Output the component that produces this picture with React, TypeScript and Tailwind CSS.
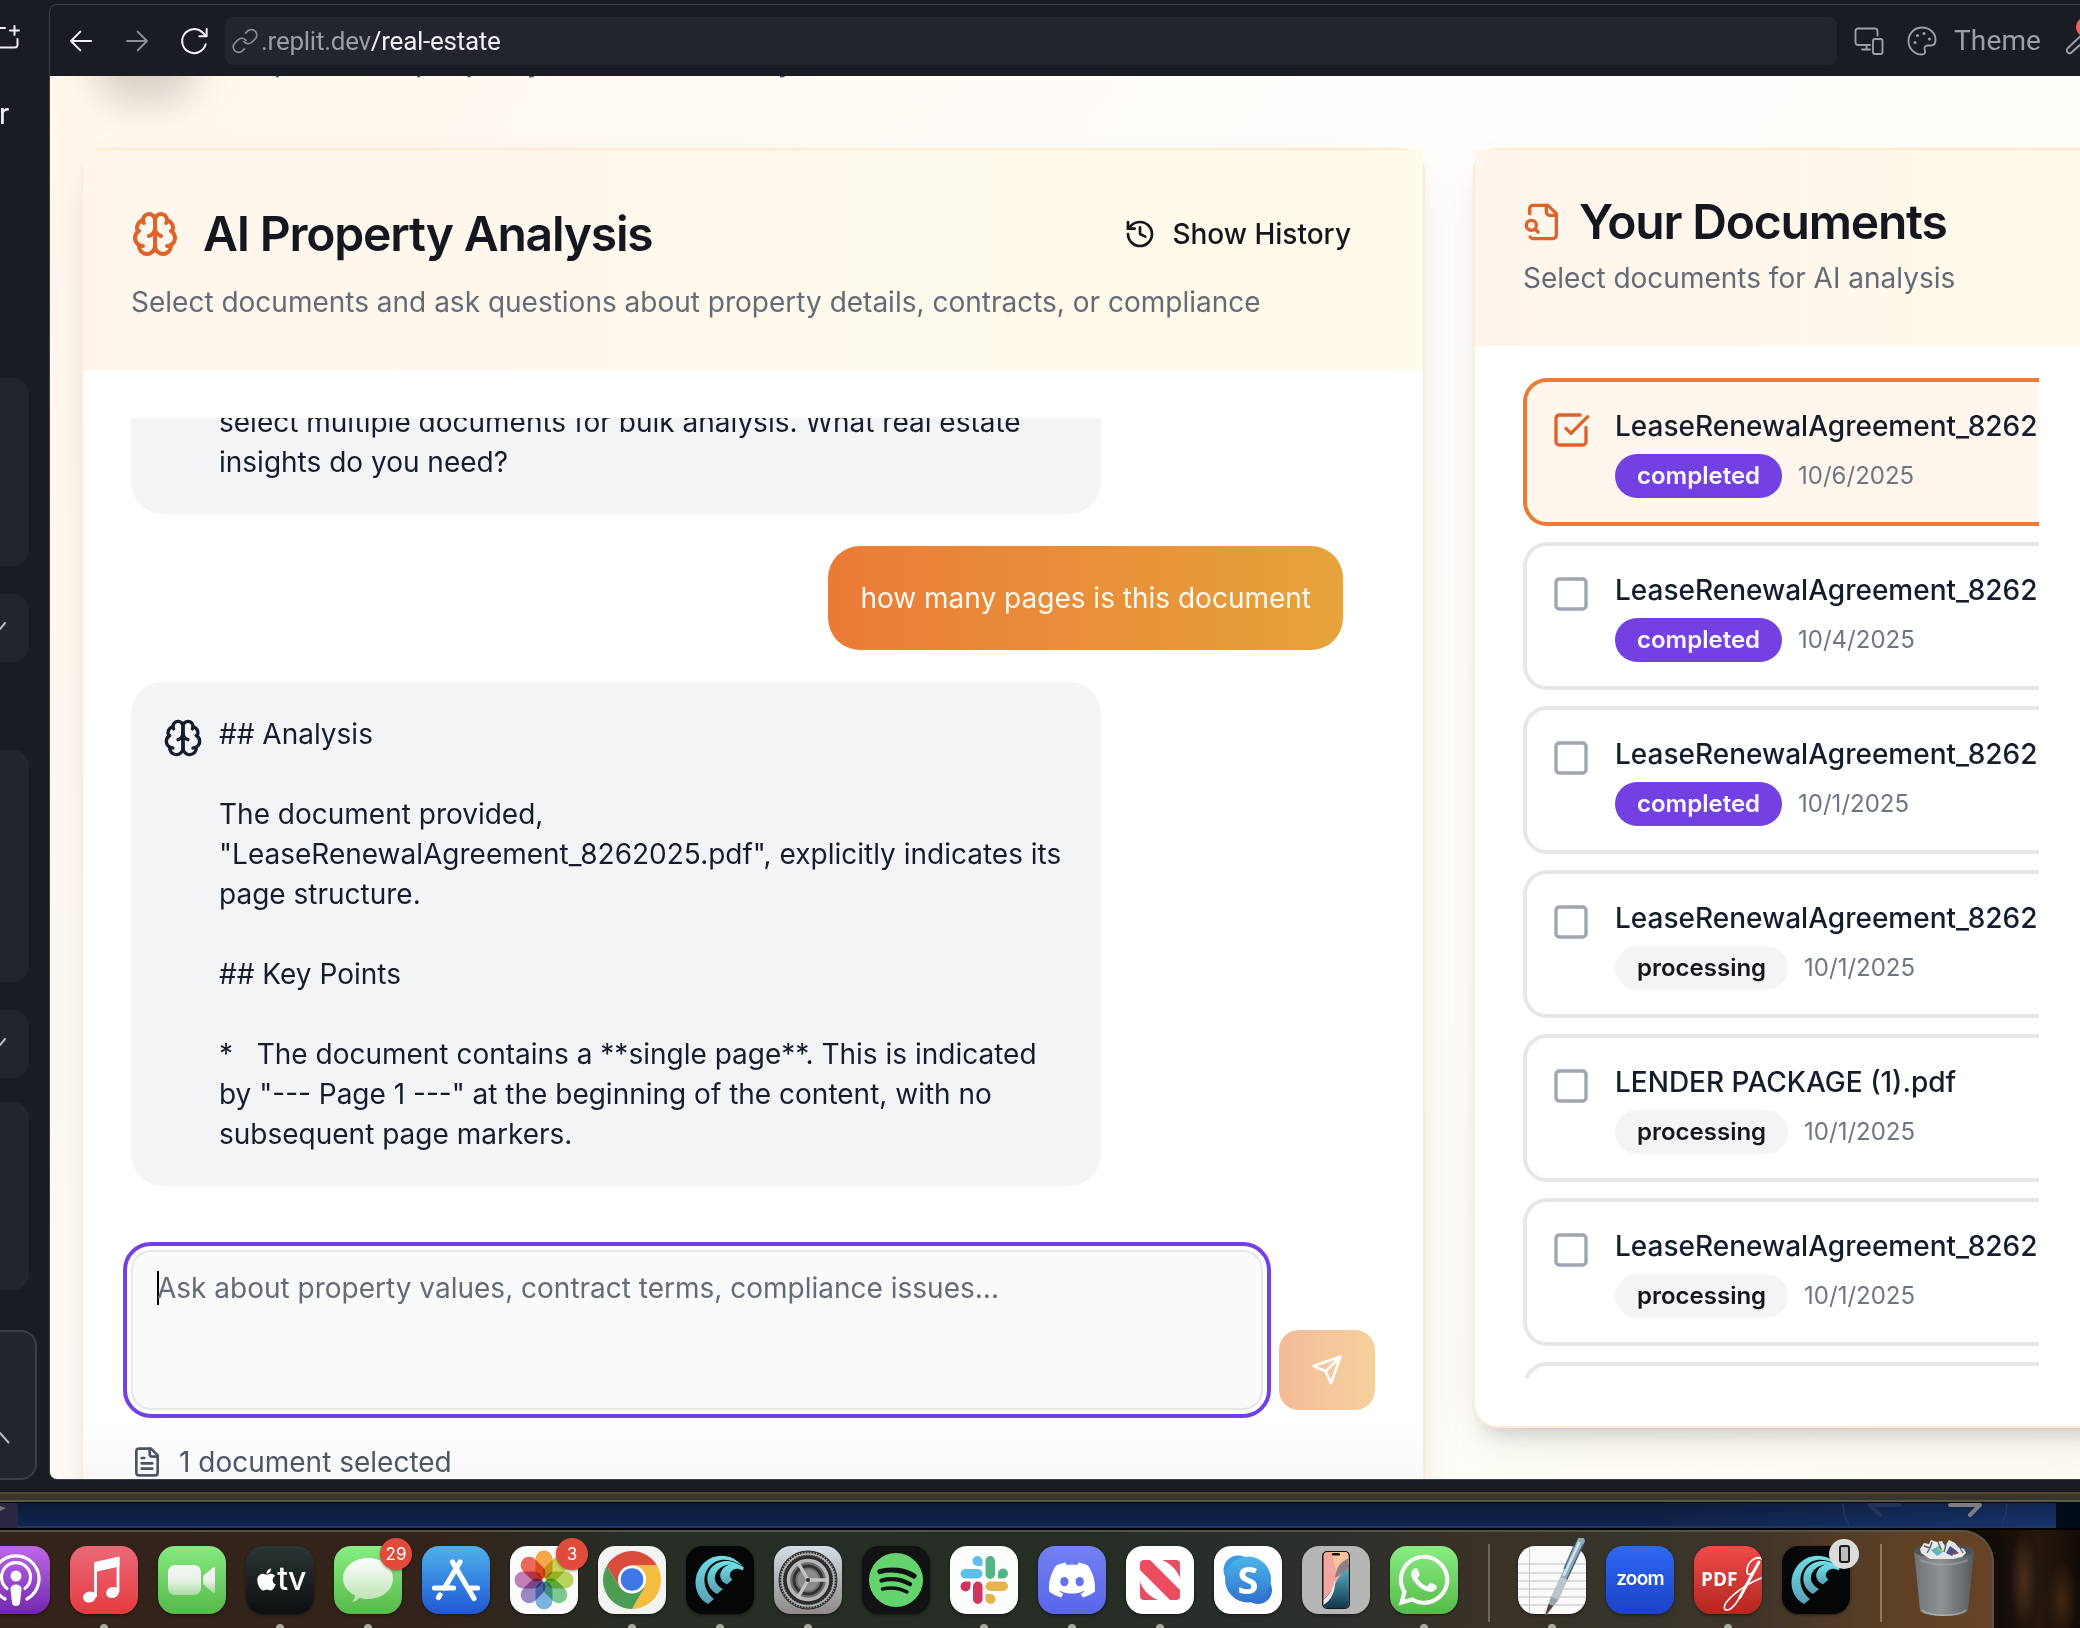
import React from "react";
import { FaApple, FaDiscord, FaWhatsapp } from "react-icons/fa";

type IconProps = { className?: string };

function Stroke({ className, width = 2, children }: { className?: string; width?: number; children: React.ReactNode }) {
  return (
    <svg viewBox="0 0 24 24" fill="none" stroke="currentColor" strokeWidth={width} strokeLinecap="round" strokeLinejoin="round" className={className}>
      {children}
    </svg>
  );
}

function Brain({ className }: IconProps) {
  return (
    <Stroke className={className}>
      <path d="M12 5a3 3 0 1 0-5.997.125 4 4 0 0 0-2.526 5.77 4 4 0 0 0 .556 6.588A4 4 0 1 0 12 18Z" />
      <path d="M12 5a3 3 0 1 1 5.997.125 4 4 0 0 1 2.526 5.77 4 4 0 0 1-.556 6.588A4 4 0 1 1 12 18Z" />
      <path d="M15 13a4.5 4.5 0 0 1-3-4 4.5 4.5 0 0 1-3 4" />
      <path d="M17.599 6.5a3 3 0 0 0 .399-1.375" />
      <path d="M6.003 5.125A3 3 0 0 0 6.401 6.5" />
      <path d="M3.477 10.896a4 4 0 0 1 .585-.396" />
      <path d="M19.938 10.5a4 4 0 0 1 .585.396" />
      <path d="M6 18a4 4 0 0 1-1.967-.516" />
      <path d="M19.967 17.484A4 4 0 0 1 18 18" />
    </Stroke>
  );
}

function History({ className }: IconProps) {
  return (
    <Stroke className={className}>
      <path d="M3 12a9 9 0 1 0 9-9 9.75 9.75 0 0 0-6.74 2.74L3 8" />
      <path d="M3 3v5h5" />
      <path d="M12 7v5l4 2" />
    </Stroke>
  );
}

function FileSearch({ className }: IconProps) {
  return (
    <Stroke className={className}>
      <path d="M14 2v4a2 2 0 0 0 2 2h4" />
      <path d="M4.268 21a2 2 0 0 0 1.727 1H18a2 2 0 0 0 2-2V7l-5-5H6a2 2 0 0 0-2 2v3" />
      <path d="m9 18-1.5-1.5" />
      <circle cx="5" cy="14" r="3" />
    </Stroke>
  );
}

function FileText({ className }: IconProps) {
  return (
    <Stroke className={className}>
      <path d="M15 2H6a2 2 0 0 0-2 2v16a2 2 0 0 0 2 2h12a2 2 0 0 0 2-2V7Z" />
      <path d="M14 2v4a2 2 0 0 0 2 2h4" />
      <path d="M10 9H8M16 13H8M16 17H8" />
    </Stroke>
  );
}

function Checkbox({ checked }: { checked: boolean }) {
  return checked ? (
    <Stroke className="mt-1 size-10 shrink-0 text-[#df6229]">
      <path d="M21 10.5V19a2 2 0 0 1-2 2H5a2 2 0 0 1-2-2V5a2 2 0 0 1 2-2h12.5" />
      <path d="m9 11 3 3L22 4" />
    </Stroke>
  ) : (
    <Stroke className="mt-1 size-10 shrink-0 text-[#9fa5b1]">
      <rect width="18" height="18" x="3" y="3" rx="2" />
    </Stroke>
  );
}

/* ---------- Workspace sidebar ---------- */

function Sidebar() {
  return (
    <aside className="flex h-[1492px] w-[49px] shrink-0 flex-col overflow-hidden bg-[#1a1c24] text-[#f0f1f4]">
      <div className="h-[76px] pt-[24px]">
        <svg viewBox="0 0 21 28" className="h-7 w-[21px]" fill="none" stroke="currentColor" strokeWidth="2" strokeLinecap="round">
          <path d="M0 4h5M14.500 2v9M10 6.500h9M17.500 15v6a2.500 2.500 0 0 1-2.500 2.500H0" />
        </svg>
      </div>
      <div className="-ml-px h-[302px] pt-[20px] font-['Roboto',sans-serif] text-[30px] leading-[36px]">r</div>
      <div className="h-[188px] w-[29px] rounded-r-2xl bg-[#22252e]" />
      <div className="mt-7 flex h-[68px] w-[29px] items-center rounded-r-2xl bg-[#22252e]">
        <svg viewBox="0 0 7 10" className="-mt-1 h-2.5 w-[7px]" fill="none" stroke="#b9bcc4" strokeWidth="2" strokeLinecap="round"><path d="M0 8 5 2" /></svg>
      </div>
      <div className="mt-[88px] h-[232px] w-[29px] rounded-r-2xl bg-[#22252e]" />
      <div className="mt-7 flex h-[68px] w-[29px] items-center rounded-r-2xl bg-[#22252e]">
        <svg viewBox="0 0 7 10" className="-mt-1 h-2.5 w-[7px]" fill="none" stroke="#b9bcc4" strokeWidth="2" strokeLinecap="round"><path d="M0 8 5 2" /></svg>
      </div>
      <div className="mt-6 h-[188px] w-[29px] rounded-r-2xl bg-[#22252e]" />
      <div className="mt-10 h-[150px] w-[37px] rounded-r-2xl border-2 border-l-0 border-[#3b3e47] bg-[#22252e] pt-[98px]">
        <svg viewBox="0 0 10 16" className="h-4 w-2.5" fill="none" stroke="#b9bcc4" strokeWidth="2" strokeLinecap="round"><path d="M0 3l8.500 9.500" /></svg>
      </div>
    </aside>
  );
}

/* ---------- Preview toolbar ---------- */

function Toolbar() {
  return (
    <div className="relative flex h-[71px] shrink-0 items-center pl-[15px] text-[#f2f3f5]">
      <Stroke className="size-8 shrink-0" width={1.5}><path d="M19.500 12H4.800M11.500 5 4.500 12l7 7" /></Stroke>
      <Stroke className="ml-6 size-8 shrink-0 text-[#8d9099]" width={1.5}><path d="M4.500 12h14.700M12.500 5l7 7-7 7" /></Stroke>
      <Stroke className="ml-[25px] size-8 shrink-0" width={1.5}><path d="M20.800 14.500a9 9 0 1 1-2.400-8.900L21.500 8.500M21.500 3v5.500H16" /></Stroke>
      <div className="ml-[15px] flex h-12 w-[1612px] shrink-0 items-center rounded-lg bg-[#22252e] pl-1.5 font-['Roboto',sans-serif] text-[26px] leading-8">
        <Stroke className="size-[28px] text-[#8d9099]" width={1.4}>
          <path d="M10 13.500a4.700 4.700 0 0 0 7 .5l2.700-2.700a4.700 4.700 0 0 0-6.600-6.700l-1.600 1.600" transform="translate(1 -1)" />
          <path d="M14 10.500a4.700 4.700 0 0 0-7-.5l-2.700 2.700a4.700 4.700 0 0 0 6.600 6.700l1.600-1.600" transform="translate(-1 1)" />
        </Stroke>
        <span className="ml-[2px] tracking-[-0.01em] text-[#9a9da6]">.replit.dev</span>
        <span className="tracking-[-0.01em] text-[#eff0f3]">/real-estate</span>
      </div>
      <div className="ml-[17px] flex shrink-0 items-center text-[#9c9fa8]">
        <svg viewBox="0 0 30 28" className="h-7 w-[30px]" fill="none" stroke="currentColor" strokeWidth="1.900" strokeLinecap="round" strokeLinejoin="round">
          <path d="M16 18H4a2.500 2.500 0 0 1-2.500-2.500V4A2.500 2.500 0 0 1 4 1.500h17A2.500 2.500 0 0 1 23.500 4v4.500M8 22.500h8M12.500 18v4.500" />
          <rect x="19" y="12" width="9.500" height="15" rx="2" />
        </svg>
        <svg viewBox="0 0 30 30" className="ml-[23px] size-[30px]" fill="none" stroke="currentColor" strokeWidth="1.900" strokeLinejoin="round">
          <path d="M15 1.500C7.500 1.500 1.500 7.500 1.500 15S7.500 28.500 15 28.500c2.500 0 3.800-2 2.900-4.200-1.200-2.900.3-4.800 3-4.800h2.600c3 0 5-2.200 5-5.500C28.500 6.800 22.500 1.500 15 1.500Z" />
          <g fill="currentColor" stroke="none"><circle cx="8" cy="16.500" r="1.500" /><circle cx="10.500" cy="9.500" r="1.500" /><circle cx="17" cy="7.500" r="1.500" /><circle cx="22.500" cy="13" r="1.500" /></g>
        </svg>
        <span className="ml-[17px] font-['Roboto',sans-serif] text-[28px] leading-9 tracking-[0.005em]">Theme</span>
        <Stroke className="ml-[22px] size-8 shrink-0" width={1.500}><path d="M14 7.500l-10.500 10a2.100 2.100 0 0 0 3 3L17 11a5 5 0 0 0 5-7l-3 3-2.500-2.500 3-3a5 5 0 0 0-5.500 6Z" /></Stroke>
      </div>
      <span className="absolute top-[12px] left-[2026px] size-5 rounded-full bg-[#f1625f]" />
    </div>
  );
}

/* ---------- Analysis card ---------- */

function AnalysisCard() {
  return (
    <section className="h-[1500px] w-[1344px] shrink-0 rounded-3xl border-2 border-[#fdebd3] bg-white shadow-[0_20px_50px_-10px_rgba(0,0,0,0.10),0_16px_20px_-12px_rgba(0,0,0,0.10)]">
      <header className="h-[220px] bg-linear-to-r from-[#fff6ed] to-[#fffbea] p-12">
        <div className="flex h-[72px] items-center justify-between">
          <h2 className="flex items-center text-5xl leading-[48px] font-semibold tracking-[-0.025em] text-[#14171f]">
            <Brain className="mr-6 size-12 text-[#df6229]" />
            AI Property Analysis
          </h2>
          <button className="flex items-center pr-6 text-[28px] leading-10 font-medium text-[#14171f]">
            <History className="mr-4 size-8" />
            Show History
          </button>
        </div>
        <p className="mt-3 text-[28px] leading-10 text-[#646b78]">Select documents and ask questions about property details, contracts, or compliance</p>
      </header>
      <div className="h-[1108px] bg-linear-to-b from-white from-95% to-[#f8f8f9] px-12 pt-12 text-[28px] leading-10 text-[#151c2c]">
        <div className="flex h-[768px] w-[1212px] flex-col justify-end gap-8 overflow-hidden">
          <div className="w-[970px] rounded-[32px] bg-[#f3f4f6] p-8 pl-[88px]">
            select multiple documents for bulk analysis. What real estate insights do you need?
          </div>
          <div className="ml-auto rounded-[32px] bg-linear-to-r from-[#ea7b36] to-[#e6a33b] p-8 text-[#fffaf3]">how many pages is this document</div>
          <div className="flex w-[970px] gap-4 rounded-[32px] bg-[#f3f4f6] p-8">
            <Brain className="mt-1 size-10 shrink-0" />
            <p className="whitespace-pre-wrap">{`## Analysis

The document provided, "LeaseRenewalAgreement_8262025.pdf", explicitly indicates its page structure.

## Key Points

*   The document contains a **single page**. This is indicated by "--- Page 1 ---" at the beginning of the content, with no subsequent page markers.`}</p>
          </div>
        </div>
        <div className="mt-16 flex items-end gap-4">
          <div className="flex h-40 w-[1132px] items-start rounded-[20px] border-2 border-[#e5e7eb] bg-[#fafafa] px-6 pt-4 text-[#646b78] outline-4 outline-offset-4 outline-[#7340e4]">
            <span className="mt-[3px] -mr-0.5 h-[34px] w-0.5 bg-black" />
            <span>Ask about property values, contract terms, compliance issues...</span>
          </div>
          <button className="flex h-20 w-24 items-center justify-center rounded-[20px] bg-linear-to-r from-[#f4bb99] to-[#f4d19c] text-white">
            <Stroke className="size-8"><path d="m22 2-7 20-4-9-9-4Z" /><path d="M22 2 11 13" /></Stroke>
          </button>
        </div>
        <div className="mt-8 flex items-center gap-4 text-[#4b5563]">
          <FileText className="size-8" />
          1 document selected
        </div>
      </div>
    </section>
  );
}

/* ---------- Documents card ---------- */

const DOCS = [
  { name: "LeaseRenewalAgreement_8262025.pdf", done: true, date: "10/6/2025", checked: true },
  { name: "LeaseRenewalAgreement_8262025.pdf", done: true, date: "10/4/2025", checked: false },
  { name: "LeaseRenewalAgreement_8262025.pdf", done: true, date: "10/1/2025", checked: false },
  { name: "LeaseRenewalAgreement_8262025.pdf", done: false, date: "10/1/2025", checked: false },
  { name: "LENDER PACKAGE (1).pdf", done: false, date: "10/1/2025", checked: false },
  { name: "LeaseRenewalAgreement_8262025.pdf", done: false, date: "10/1/2025", checked: false },
  { name: "LeaseRenewalAgreement_8262025.pdf", done: false, date: "10/1/2025", checked: false },
];

function DocumentsCard() {
  return (
    <section className="h-[1280px] w-[660px] shrink-0 rounded-3xl border-2 border-[#fdebd3] bg-white shadow-[0_20px_50px_-10px_rgba(0,0,0,0.10),0_16px_20px_-12px_rgba(0,0,0,0.16)]">
      <header className="h-[196px] bg-linear-to-r from-[#fff5ec] to-[#fffbea] p-12">
        <h2 className="flex items-center text-5xl leading-[48px] font-semibold tracking-[-0.025em] text-[#14171f]">
          <FileSearch className="mr-4 size-10 text-[#df6229]" />
          Your Documents
        </h2>
        <p className="mt-3 text-[28px] leading-10 text-[#646b78]">Select documents for AI analysis</p>
      </header>
      <div className="mt-8 ml-12 flex h-[1000px] w-[516px] flex-col gap-4 overflow-hidden">
        {DOCS.map((doc, i) => (
          <div
            key={i}
            className={
              doc.checked
                ? "flex h-[148px] w-[760px] shrink-0 gap-6 rounded-3xl border-4 border-[#ea7c37] bg-[#fff7ed] p-6"
                : "flex h-[148px] w-[760px] shrink-0 gap-6 rounded-3xl border-4 border-[#e5e7eb] bg-white p-6"
            }
          >
            <Checkbox checked={doc.checked} />
            <div>
              <div className="text-[28px] leading-10 font-medium text-[#151c2c]">{doc.name}</div>
              <div className="mt-2 flex items-center gap-4 text-2xl leading-8">
                <span
                  className={
                    doc.done
                      ? "flex h-11 items-center rounded-full bg-[#7340e4] px-[22px] font-semibold text-[#faf8ff]"
                      : "flex h-11 items-center rounded-full bg-[#f3f4f6] px-[22px] font-semibold text-[#15171e]"
                  }
                >
                  {doc.done ? "completed" : "processing"}
                </span>
                <span className="text-[#6f7683]">{doc.date}</span>
              </div>
            </div>
          </div>
        ))}
      </div>
    </section>
  );
}

/* ---------- Dock ---------- */

function AppIcon({ bg, dot, badge, children }: { bg?: string; dot?: boolean; badge?: React.ReactNode; children: React.ReactNode }) {
  return (
    <div className="relative h-[96px] w-[68px] shrink-0">
      <div className={"relative size-[68px] overflow-hidden rounded-[17px] shadow-[0_1px_3px_rgba(0,0,0,0.5)] " + (bg ?? "")}>{children}</div>
      {badge}
      {dot && <span className="absolute top-[78px] left-[30px] size-2 rounded-full bg-[#a9aa9f]" />}
    </div>
  );
}

function Badge({ n }: { n: string }) {
  return (
    <span className="absolute -top-2 left-[46px] flex size-8 items-center justify-center rounded-full bg-[#e04b3c] text-[17px] leading-none text-white shadow-[0_1px_3px_rgba(0,0,0,0.4)]">
      {n}
    </span>
  );
}

const Art = ({ children }: { children: React.ReactNode }) => (
  <svg viewBox="0 0 68 68" className="size-[68px]">{children}</svg>
);

function Wave({ id }: { id: string }) {
  return (
    <Art>
      <defs>
        <linearGradient id={id} x1="0" y1="0" x2="0" y2="1"><stop offset="0" stopColor="#6fdfe6" /><stop offset="1" stopColor="#5aa0b4" /></linearGradient>
      </defs>
      <g fill={`url(#${id})`}>
        <path d="M22 58C7 50 5 28 19 16 30 6 48 8 57 21 45 12 32 11 23 21 15 31 18 45 28 53Z" />
        <path d="M31 48C20 42 18 28 27 20 35 13 48 13 57 22 46 17 38 18 32 24 26 31 29 39 37 43Z" />
        <path d="M41 38.500C33 35 32 27 38 21.500 44 16.500 53 18 58 21.500L56.500 24.500C51 21 47 23 45 26 43 29 44 31.500 46.500 33.500Z" />
      </g>
    </Art>
  );
}

const PETALS = ["#f59a23", "#c5cf2e", "#a8cf3c", "#63bf7d", "#5fa5dc", "#8272b8", "#b765a8", "#ea4b38"];
const RULES = [18, 27, 35, 43, 51, 59];
const ANGLES = Array.from({ length: 60 }, (_, i) => i * 6);

function Dock() {
  return (
    <div className="flex h-[98px] w-full bg-[radial-gradient(ellipse_14px_50px_at_2024px_50px,#4a2f1a,transparent),radial-gradient(ellipse_16px_40px_at_2062px_70px,#40250f,transparent),linear-gradient(90deg,#140c07_0%,#140c07_96%,#25170d_98%,#120b07_100%)]">
      <div className="h-[140px] w-[1994px] shrink-0 overflow-hidden rounded-tr-[32px] border-t-2 border-r-2 border-[#57534a] bg-[linear-gradient(90deg,#33231a_0%,#33241b_22%,#262e26_32%,#262d25_55%,#2b2f2e_66%,#3a3227_74%,#36342b_82%,#3f3428_88%,#5c4025_95%,#684325_100%)]">
        <div className="-ml-[18px] flex items-start gap-5 pt-3.5">
          <AppIcon bg="bg-linear-to-b from-[#bd68e6] to-[#7226b0]">
            <Art>
              <g fill="none" stroke="#fff" strokeWidth="3.200" strokeLinecap="round"><path d="M23 53a23 23 0 1 1 22 0" /><path d="M25 42.500a14.500 14.500 0 1 1 18 0" /></g>
              <circle cx="34" cy="30" r="5.500" fill="#fff" /><path d="M28.500 43c0-6 11-6 11 0l-1.500 14c-.5 4-7.500 4-8 0Z" fill="#fff" />
            </Art>
          </AppIcon>
          <AppIcon dot bg="bg-linear-to-b from-[#ea6878] to-[#e6393f]">
            <Art>
              <path d="M25.500 51V18.500L48 13.500V46" fill="none" stroke="#fff" strokeWidth="2.800" /><path d="M24.500 16 49.500 10.500V20.500L24.500 26Z" fill="#fff" />
              <ellipse cx="19.500" cy="51" rx="6.500" ry="5.500" fill="#fff" transform="rotate(-15 19.500 51)" /><ellipse cx="42.500" cy="46.500" rx="6.500" ry="5.500" fill="#fff" transform="rotate(-15 42.500 46.500)" />
            </Art>
          </AppIcon>
          <AppIcon bg="bg-linear-to-b from-[#85ea80] to-[#57b948]">
            <Art>
              <defs><linearGradient id="cam" x1="0" y1="0" x2="0" y2="1"><stop offset="0" stopColor="#f4f6f4" /><stop offset=".5" stopColor="#eaf3e8" /><stop offset="1" stopColor="#a9dda2" /></linearGradient></defs>
              <rect x="10" y="19" width="33" height="30" rx="7" fill="url(#cam)" /><path d="M45 30 55 21.500c1-.8 2-.3 2 1v23c0 1.300-1 1.800-2 1L45 38Z" fill="url(#cam)" />
            </Art>
          </AppIcon>
          <AppIcon dot bg="bg-linear-to-b from-[#2a3634] to-[#0c0f11]">
            <div className="flex size-full items-center justify-center pb-0.5 text-white">
              <FaApple className="size-[25px]" />
              <span className="-ml-[2px] font-['Inter',sans-serif] text-[32px] leading-none font-medium tracking-tight">tv</span>
            </div>
          </AppIcon>
          <AppIcon dot bg="bg-linear-to-b from-[#88ee83] to-[#57b948]" badge={<Badge n="29" />}>
            <Art>
              <defs><linearGradient id="msg" x1="0" y1="0" x2="0" y2="1"><stop offset="0" stopColor="#fff" /><stop offset="1" stopColor="#b9e2b1" /></linearGradient></defs>
              <path d="M34 12c14 0 25 9 25 20.500S48 53 34 53c-3 0-6-.4-8.500-1.200-2 2.200-4.500 3.700-7.500 4.200 2-2 3-4.500 3-6.500C13.500 46 9 39.500 9 32.500 9 21 20 12 34 12Z" fill="url(#msg)" />
            </Art>
          </AppIcon>
          <AppIcon bg="bg-linear-to-b from-[#50b0ea] to-[#2456d3]">
            <Art>
              <g stroke="#fff" strokeWidth="5.200" strokeLinecap="round"><path d="M12.500 42h19M49 42h6.500" /><path d="M38 16 22.500 42" /><path d="M30.500 16 52 52.500" /><path d="M16.500 51.500l1.500-2.500" /></g>
            </Art>
          </AppIcon>
          <AppIcon bg="bg-[#fbfbfb]" badge={<Badge n="3" />}>
            <Art>
              {PETALS.map((c, i) => (
                <rect key={c} x="25.500" y="4.500" width="17" height="28" rx="8.500" fill={c} fillOpacity="0.82" transform={`rotate(${i * 45} 34 34)`} style={{ mixBlendMode: "multiply" }} />
              ))}
            </Art>
          </AppIcon>
          <AppIcon dot bg="bg-[#f3f3f3]">
            <Art>
              <path d="M34 33.500 8.900 19.500A29 29 0 0 1 59.100 19.500H34Z" fill="#d94d3c" />
              <path d="M34 19.500H59.100A29 29 0 0 1 34 63L46.500 41Z" fill="#f3bd42" />
              <path d="M34 63A29 29 0 0 1 8.900 19.500L21.500 41.300 46.500 41.200Z" fill="#4b9d52" />
              <path d="M8.900 19.500 21.500 41.300 34 34V19.500Z" fill="#d94d3c" />
              <circle cx="34" cy="33.500" r="14" fill="#fff" /><circle cx="34" cy="33.500" r="11.300" fill="#3e78e6" />
            </Art>
          </AppIcon>
          <AppIcon dot bg="bg-[#050607]"><Wave id="wave-a" /></AppIcon>
          <AppIcon dot bg="bg-linear-to-b from-[#d5dfe7] to-[#8f8a88]">
            <Art>
              <circle cx="34" cy="34" r="29.500" fill="#2a2c2e" /><circle cx="34" cy="34" r="26" fill="none" stroke="#b4b8bb" strokeWidth="1.500" />
              <g stroke="#a7abae" strokeWidth="1.100">{ANGLES.map((a) => <path key={a} d="M34 5.500v4" transform={`rotate(${a} 34 34)`} />)}</g>
              <circle cx="34" cy="34" r="19.500" fill="#6d6f70" stroke="#b4b8bb" strokeWidth="3.500" />
              <circle cx="34" cy="34" r="14" fill="none" stroke="#303234" strokeWidth="3" /><circle cx="34" cy="34" r="10.500" fill="#8b8c8c" />
              <g stroke="#c0c3c5" strokeWidth="3.400"><path d="M34 34h20M34 34 24 16.500M34 34 24 51.500" /></g><circle cx="34" cy="34" r="2" fill="#2a2c2e" />
            </Art>
          </AppIcon>
          <AppIcon bg="bg-[#121212]">
            <Art>
              <circle cx="34" cy="34" r="27" fill="#65d46e" />
              <g fill="none" stroke="#121212" strokeLinecap="round"><path d="M18 25.500c11-3 24-1.500 34 4.500" strokeWidth="5.200" /><path d="M19.500 34.500c10-2.500 20-1.300 28.500 3.700" strokeWidth="4.300" /><path d="M20.500 43c8.500-2 17-1 24.500 3" strokeWidth="3.500" /></g>
            </Art>
          </AppIcon>
          <AppIcon dot bg="bg-[#fdfdfd]">
            <Art>
              <g fill="#5ec0ea"><rect x="10.500" y="23" width="22" height="9.500" rx="4.750" /><path d="M32.500 20V15a5 5 0 1 0-5 5Z" /></g>
              <g fill="#55b384"><rect x="35.500" y="10" width="9.500" height="23" rx="4.750" /><path d="M48 32.500V27.500a5 5 0 1 1 5 5Z" /></g>
              <g fill="#e5b44c"><rect x="35.500" y="35.500" width="22.500" height="9.500" rx="4.750" /><path d="M35.500 48h5a5 5 0 1 1-5 5Z" /></g>
              <g fill="#d0345f"><rect x="23" y="35.500" width="9.500" height="22.500" rx="4.750" /><path d="M20.500 35.500v5a5 5 0 1 1-5-5Z" /></g>
            </Art>
          </AppIcon>
          <AppIcon dot bg="bg-linear-to-b from-[#7480f0] to-[#5865ea]">
            <div className="flex size-full items-center justify-center text-white"><FaDiscord className="size-[50px]" /></div>
          </AppIcon>
          <AppIcon dot bg="bg-white">
            <Art>
              <path d="M14 18a4 4 0 0 1 4-4h6l30 30v6a4 4 0 0 1-4 4h-6L14 24Z" fill="#ea4d60" /><path d="M36 14h14a4 4 0 0 1 4 4v14C51 24 44 17 36 14Z" fill="#e54f62" /><path d="M14 36c3 8 10 15 18 18H18a4 4 0 0 1-4-4Z" fill="#e54f62" />
            </Art>
          </AppIcon>
          <AppIcon bg="bg-white">
            <div className="relative size-full">
              <Art>
                <defs><linearGradient id="sky" x1="0" y1="0" x2="0" y2="1"><stop offset="0" stopColor="#4cb4ec" /><stop offset="1" stopColor="#2f73cd" /></linearGradient></defs>
                <circle cx="24" cy="24" r="14.500" fill="#3b9be0" /><circle cx="44" cy="44" r="14" fill="#2f73cd" /><circle cx="34" cy="33.500" r="23" fill="url(#sky)" />
              </Art>
              <span className="absolute inset-0 flex items-center justify-center pb-0.5 font-['Open_Sans',sans-serif] text-[38px] leading-none font-bold text-white">S</span>
            </div>
          </AppIcon>
          <AppIcon bg="bg-[#b5b6b6]">
            <Art>
              <defs><linearGradient id="ph" x1="0" y1="0" x2="0" y2="1"><stop offset="0" stopColor="#4fb4c4" /><stop offset="1" stopColor="#11314c" /></linearGradient><clipPath id="phc"><rect x="21.500" y="6" width="25" height="56" rx="4" /></clipPath></defs>
              <rect x="20" y="5" width="28" height="58" rx="5" fill="#15171a" />
              <g clipPath="url(#phc)"><rect x="21" y="6" width="27" height="57" fill="#f3a6a0" /><path d="M30 6h18v12c-8 2-10 6-13 14Z" fill="#f7c49d" /><path d="M48 12c-9 3-14 9-15 20l15-9Z" fill="#8a7f8c" /><path d="M48 22C34 28 36 40 21 54v9h27Z" fill="url(#ph)" /><path d="M33 33C31 45 26 50 21 54v5c8-4 13-14 12-26Z" fill="#f4e6e2" /></g>
              <rect x="30" y="7" width="8" height="2.500" rx="1.200" fill="#111" />
            </Art>
          </AppIcon>
          <AppIcon dot bg="bg-linear-to-b from-[#88ee83] to-[#57b948]">
            <div className="flex size-full items-center justify-center text-[#f6f7f6]"><FaWhatsapp className="size-[58px]" /></div>
          </AppIcon>
          <div className="-mt-0.5 ml-[10px] h-[78px] w-0.5 shrink-0 bg-[#6c6b62]" />
          <div className="ml-2 flex gap-5">
            <AppIcon
              dot
              bg="bg-[#fbfbfb]"
              badge={
                <svg viewBox="0 0 68 84" className="absolute -top-2 left-0 h-[84px] w-[68px]">
                  <path d="M63 3 37 60" stroke="#8fa9bf" strokeWidth="7.500" strokeLinecap="round" />
                  <path d="M61.500 4 45.500 38" stroke="#cfe4f3" strokeWidth="2.600" />
                  <path d="M65.500 6 48 43" stroke="#4d5a66" strokeWidth="1.400" />
                  <path d="M56 8 46 31" stroke="#5d7183" strokeWidth="1.600" />
                  <path d="M46 40 36.500 60" stroke="#bcc4ca" strokeWidth="7.500" />
                  <path d="M32.500 59 40 62.500 27.500 78Z" fill="#9aa3aa" />
                  <path d="M30.500 66 35 68 26.500 79Z" fill="#4d3f3d" />
                </svg>
              }
            >
              <Art><path d="M11.500 0v68" stroke="#f2b5ae" strokeWidth="1" /><g stroke="#bcbdbe" strokeWidth="1.200">{RULES.map((y) => <path key={y} d={`M0 ${y}h68`} />)}</g></Art>
            </AppIcon>
            <AppIcon bg="bg-linear-to-b from-[#2e69f0] to-[#1b41c9]">
              <span className="flex size-full items-center justify-center pb-1 font-['Inter',sans-serif] text-[19px] leading-none font-semibold tracking-[-0.04em] text-white">zoom</span>
            </AppIcon>
            <AppIcon dot bg="bg-linear-to-b from-[#f04b49] to-[#b5261f]">
              <div className="relative size-full">
                <Art>
                  <g fill="none" stroke="#fff" strokeLinecap="round">
                    <path d="M68 13C62 9 53 16 53 25c0 7 7 3 12-9" strokeWidth="1.800" />
                    <path d="M65 16 46 51" strokeWidth="3" />
                    <path d="M46 51C41 60 35 66 31 63.500 27 58 44 42 67 32" strokeWidth="1.600" />
                  </g>
                </Art>
                <span className="absolute top-[24px] left-[7px] font-['Open_Sans',sans-serif] text-[19px] leading-none font-bold text-white">PDF</span>
              </div>
            </AppIcon>
            <AppIcon
              bg="bg-[#050607]"
              badge={
                <span className="absolute -top-[7px] left-[47px] flex size-[30px] items-center justify-center rounded-full bg-[#dcdcdb]">
                  <span className="h-[18px] w-[11px] rounded-[3px] border-2 border-[#1b1b1b] bg-[#bdbdbd]" />
                </span>
              }
            >
              <Wave id="wave-b" />
            </AppIcon>
          </div>
          <div className="-mt-0.5 ml-[10px] h-[78px] w-0.5 shrink-0 bg-[#8e7a63]" />
          <svg viewBox="0 0 68 84" className="-mt-2 ml-[8px] h-[84px] w-[68px]">
            <defs><linearGradient id="bin" x1="0" y1="0" x2="1" y2="0"><stop offset="0" stopColor="#717476" /><stop offset=".45" stopColor="#8f9294" /><stop offset="1" stopColor="#585b5d" /></linearGradient></defs>
            <path d="M4 12h60L58 72c-1 8-47 8-48 0Z" fill="url(#bin)" />
            <ellipse cx="34" cy="13" rx="30" ry="7" fill="#4e5153" />
            <path d="M10 11 14 5l5 1 2-4 6 2 5-1 3 5 4-6 6 3 3 4 6 2 2 4-4 4-9 2H20L11 15Z" fill="#e6e8ea" />
            <path d="M21 12l8-4 4 6-6 4Z" fill="#5fb3c4" /><path d="M27 10l4-1 2 4-4 1Z" fill="#86c96b" /><path d="M40 8l7 5-5 5-6-3Z" fill="#475582" /><path d="M45 12l4 3-5 2Z" fill="#8c4a3c" />
            <path d="M14 8l6 2-3 5M49 8l4 7M28 4l3 7M36 6l-2 8M22 4l-2 6" stroke="#5d6165" strokeWidth="1.400" fill="none" />
            <path d="M10 22c14 6 34 6 48 0" stroke="#b9bcbe" strokeWidth="2" fill="none" opacity=".4" /><path d="M12 72c8 7 36 7 44 0" stroke="#c7cacc" strokeWidth="1.500" fill="none" opacity=".6" />
          </svg>
        </div>
      </div>
    </div>
  );
}

export default function App() {
  return (
    <div className="h-[1628px] w-[2080px] overflow-hidden bg-black font-['Inter',sans-serif]">
      <div className="flex h-[1492px] bg-[#1a1c24]">
        <Sidebar />
        <div className="mt-1 h-[1476px] w-[2031px] overflow-hidden rounded-l-lg border-t border-b border-l border-[#3b3e47]">
          <Toolbar />
          <main className="relative h-[1403px] overflow-hidden bg-[linear-gradient(125deg,#fff7eb_0%,#fffefd_48%,#fffefb_60%,#fffcf3_100%)]">
            <div className="absolute top-[-56px] left-[61px] h-12 w-[70px] rounded-2xl shadow-[0_20px_36px_14px_rgba(30,20,30,0.17)]" />
            <p className="absolute -top-[34px] left-[178px] text-[32px] leading-9 whitespace-nowrap text-[#4b5563]">AI-powered property document analysis</p>
            <div className="relative flex gap-12 pt-[72px] pl-[31px]">
              <AnalysisCard />
              <DocumentsCard />
            </div>
          </main>
        </div>
      </div>
      <div className="h-2.5 border-t-2 border-b-2 border-t-[#504930] border-b-[#5b5a50] bg-[#38352b]" />
      <div className="mt-px flex h-[25px]">
        <div className="w-[18px] bg-[#2c2741]"><svg viewBox="0 0 18 25" className="h-[25px] w-[18px]"><path d="M0 3l6 2-6 3" fill="#777370" /></svg></div>
        <div className="flex w-[2038px] justify-end border-b-2 border-[#22375f] bg-[linear-gradient(180deg,rgba(0,0,0,0.28),transparent),linear-gradient(90deg,#10254e_0%,#10254e_80%,#18346e_100%)] pr-12">
          <div className="h-[22px] w-[166px] overflow-hidden">
            <svg viewBox="0 0 166 24" className="h-6 w-[166px]" fill="none" strokeLinecap="round">
              <path d="M1 0c0 12 4 20 9 26M165 0c0 12-4 20-9 26" stroke="#24365e" strokeWidth="1.500" />
              <path d="M28 2h30M28 2l10 10" stroke="#21345a" strokeWidth="4" /><path d="M108 2h30M138 2l-10 10" stroke="#7b7d80" strokeWidth="4" />
            </svg>
          </div>
        </div>
        <div className="w-6 bg-[#020b18]" />
      </div>
      <div className="mt-0.5"><Dock /></div>
    </div>
  );
}
